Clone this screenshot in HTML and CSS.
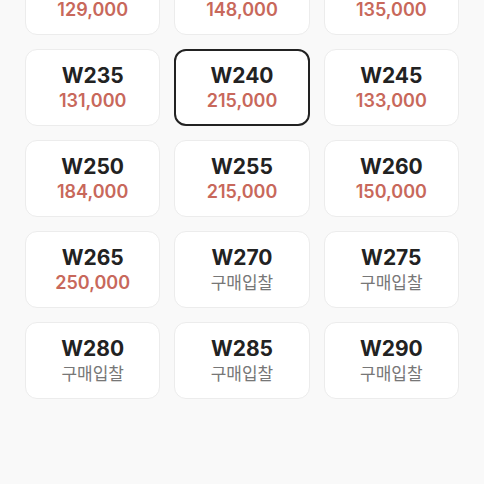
FILE: index.html
```html
<!DOCTYPE html>
<html lang="ko">
<head>
  <meta charset="UTF-8" />
  <meta name="viewport" content="width=device-width, initial-scale=1.0" />
  <title>사이즈 선택</title>
  <link rel="stylesheet" href="styles.css">
</head>
<body>
  <div class="size-grid">
    <div class="size-card"><span class="size">W220</span><span class="price">129,000</span></div>
    <div class="size-card"><span class="size">W225</span><span class="price">148,000</span></div>
    <div class="size-card"><span class="size">W230</span><span class="price">135,000</span></div>

    <div class="size-card"><span class="size">W235</span><span class="price">131,000</span></div>
    <div class="size-card selected"><span class="size">W240</span><span class="price">215,000</span></div>
    <div class="size-card"><span class="size">W245</span><span class="price">133,000</span></div>

    <div class="size-card"><span class="size">W250</span><span class="price">184,000</span></div>
    <div class="size-card"><span class="size">W255</span><span class="price">215,000</span></div>
    <div class="size-card"><span class="size">W260</span><span class="price">150,000</span></div>

    <div class="size-card"><span class="size">W265</span><span class="price">250,000</span></div>
    <div class="size-card"><span class="size">W270</span><span class="price empty">구매입찰</span></div>
    <div class="size-card"><span class="size">W275</span><span class="price empty">구매입찰</span></div>

    <div class="size-card"><span class="size">W280</span><span class="price empty">구매입찰</span></div>
    <div class="size-card"><span class="size">W285</span><span class="price empty">구매입찰</span></div>
    <div class="size-card"><span class="size">W290</span><span class="price empty">구매입찰</span></div>
  </div>
</body>
</html>
```
FILE: styles.css
```css
* {
  box-sizing: border-box;
}

body {
  margin: 0;
  background: #f9f9f9;
  font-family: Inter, "Noto Sans CJK KR", sans-serif;
}

.size-grid {
  display: grid;
  grid-template-columns: repeat(3, 1fr);
  gap: 14px;
  padding: 0 25px;
  margin-top: -42px;
}

.size-card {
  height: 77px;
  background: #fff;
  border: 1px solid #ececec;
  border-radius: 12px;
  display: flex;
  flex-direction: column;
  align-items: center;
  justify-content: center;
}

.size-card.selected {
  border: 2px solid #222;
}

.size {
  font-size: 21px;
  font-weight: 700;
  color: #222;
  line-height: 26px;
}

.price {
  font-size: 18px;
  font-weight: 600;
  color: #c8685b;
  line-height: 24px;
}

.price.empty {
  font-size: 17px;
  font-weight: 400;
  color: #777;
}
```
